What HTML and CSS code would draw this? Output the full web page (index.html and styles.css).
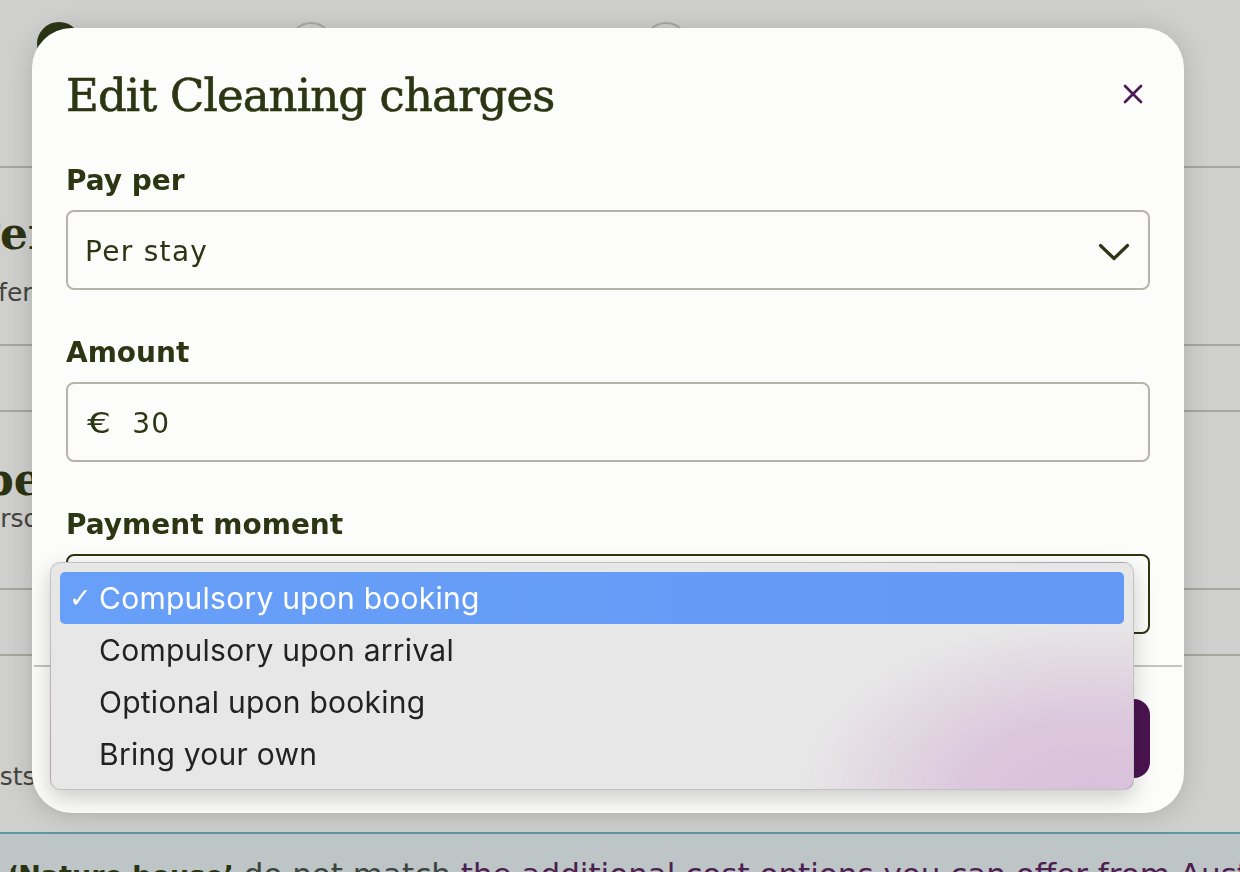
FILE: index.html
```html
<!DOCTYPE html>
<html lang="en">
<head>
<meta charset="utf-8">
<title>Edit Cleaning charges</title>
<link rel="stylesheet" href="styles.css">
</head>
<body>
<div class="page">
  <header class="steps">
    <div class="step"><span class="dot dot-done"></span></div>
    <div class="step"><span class="dot"></span></div>
    <div class="step"><span class="dot"></span></div>
  </header>
  <section class="row row-tall">
    <h2 class="row-title shift-a">Per person</h2>
    <p class="row-sub shift-b">Offer cleaning to your guests</p>
  </section>
  <section class="row row-short"></section>
  <section class="row row-tall row-3">
    <h2 class="row-title shift-c">per stay</h2>
    <p class="row-sub shift-d">person</p>
  </section>
  <section class="row row-short"></section>
  <section class="row row-last">
    <p class="row-sub shift-e">Costs for guests</p>
  </section>
  <div class="notice">
    <p><strong>‘Nature house’</strong> do not match <a class="notice-link">the additional cost options you can offer from Austria</a></p>
  </div>
</div>

<div class="modal">
  <div class="modal-head">
    <h1 class="modal-title">Edit Cleaning charges</h1>
    <button class="close" aria-label="Close">
      <svg width="20" height="20" viewBox="0 0 20 20"><path d="M2 2 L18 18 M18 2 L2 18" stroke="#4b1a55" stroke-width="2.6" fill="none" stroke-linecap="round"/></svg>
    </button>
  </div>

  <div class="field">
    <span class="field-label">Pay per</span>
    <div class="box">
      <span>Per stay</span>
      <svg class="chev" width="32" height="18" viewBox="0 0 32 18"><path d="M2.5 2.5 L16 15.5 L29.5 2.5" stroke="#2d3512" stroke-width="3.2" fill="none" stroke-linecap="round" stroke-linejoin="round"/></svg>
    </div>
  </div>

  <div class="field">
    <span class="field-label">Amount</span>
    <div class="box box-start">
      <span class="currency">€</span><span class="amount">30</span>
    </div>
  </div>

  <div class="field">
    <span class="field-label">Payment moment</span>
    <div class="box box-focus">
      <span>Compulsory upon booking</span>
      <svg class="chev" width="32" height="18" viewBox="0 0 32 18"><path d="M2.5 2.5 L16 15.5 L29.5 2.5" stroke="#2d3512" stroke-width="3.2" fill="none" stroke-linecap="round" stroke-linejoin="round"/></svg>
    </div>
  </div>

  <hr class="divider">

  <div class="modal-foot">
    <button class="save">Save</button>
  </div>
</div>

<div class="menu">
  <div class="menu-item selected"><span class="check">✓</span><span>Compulsory upon booking</span></div>
  <div class="menu-item"><span class="check"></span><span>Compulsory upon arrival</span></div>
  <div class="menu-item"><span class="check"></span><span>Optional upon booking</span></div>
  <div class="menu-item"><span class="check"></span><span>Bring your own</span></div>
</div>
</body>
</html>
```

FILE: styles.css
```css
html, body {
  margin: 0;
  height: 872px;
  overflow: hidden;
}
body {
  background: #cfcfcd;
  font-family: "DejaVu Sans", sans-serif;
}

/* background page */
.steps {
  height: 168px;
  box-sizing: border-box;
  padding: 22px 0 0 37px;
  display: grid;
  grid-template-columns: 252px 355px 1fr;
  align-items: start;
  border-bottom: 2px solid #a6a59e;
}
.dot {
  display: block;
  width: 44px;
  height: 44px;
  border-radius: 50%;
  box-sizing: border-box;
  border: 2px solid #a9a8a1;
}
.dot-done {
  background: #2e3516;
  border-color: #2e3516;
}
.row {
  box-sizing: border-box;
  border-bottom: 2px solid #a6a59e;
  overflow: hidden;
}
.row-tall { height: 178px; padding-top: 40px; }
.row-short { height: 66px; }
.row-3 { padding-top: 42px; }
.row-last {
  height: 178px;
  padding-top: 106px;
  border-bottom-color: #5b97a2;
}
.row-title {
  margin: 0;
  font: bold 44px/52px "DejaVu Serif", serif;
  color: #2b3311;
  white-space: nowrap;
}
.row-sub {
  margin: 18px 0 0;
  font: 25px/30px "DejaVu Sans", sans-serif;
  color: #45453f;
  white-space: nowrap;
}
.row-3 .row-sub { margin-top: -2px; }
.row-last .row-sub { margin-top: 0; }
.shift-a { margin-left: -32px; }
.shift-b { margin-left: -30px; }
.shift-c { margin-left: -17px; }
.shift-d { margin-left: -31px; }
.shift-e { margin-left: -33px; }

.notice {
  background: #bec5c6;
  height: 38px;
  box-sizing: border-box;
  padding: 23px 0 0 8px;
  overflow: hidden;
}
.notice p {
  margin: 0;
  font: 31px/34px "DejaVu Sans", sans-serif;
  color: #3d4440;
  white-space: nowrap;
}
.notice strong {
  color: #2b3311;
  font-size: 27px;
}
.notice-link { color: #4d2050; }

/* modal */
.modal {
  position: fixed;
  left: 32px;
  top: 28px;
  width: 1152px;
  height: 785px;
  box-sizing: border-box;
  padding: 42px 34px 34px;
  background: #fcfcfa;
  border-radius: 40px;
  box-shadow: 0 2px 26px rgba(0, 0, 0, 0.16);
  display: flex;
  flex-direction: column;
}
.modal-head {
  display: flex;
  justify-content: space-between;
  align-items: center;
}
.modal-title {
  margin: 0;
  font: normal 45px/52px "DejaVu Serif", serif;
  letter-spacing: -0.9px;
  color: #2d3512;
  -webkit-text-stroke: 0.6px #2d3512;
}
.close {
  background: none;
  border: 0;
  padding: 0;
  width: 20px;
  height: 20px;
  margin: -5px 7px 0 0;
  display: flex;
}
.field { margin-top: 43px; }
.field + .field { margin-top: 47px; }
.field-label {
  display: block;
  font: bold 28px/32px "DejaVu Sans", sans-serif;
  color: #2d3512;
  margin-bottom: 13px;
}
.box {
  height: 80px;
  box-sizing: border-box;
  border: 2px solid #b6b4a9;
  border-radius: 8px;
  display: flex;
  align-items: center;
  justify-content: space-between;
  padding: 4px 18px 0 17px;
  font: 28px/32px "DejaVu Sans", sans-serif;
  letter-spacing: 1.3px;
  color: #2d3512;
}
.box-start { justify-content: flex-start; }
.box-focus { border-color: #2d3512; }
.chev { display: block; }
.currency {
  display: inline-block;
  transform: scaleX(1.35);
  transform-origin: left center;
  margin-left: 2px;
}
.amount { margin-left: 26px; }
.divider {
  margin: 31px -32px 0;
  height: 2px;
  border: 0;
  background: #c6c4ba;
}
.modal-foot {
  display: flex;
  justify-content: flex-end;
  margin-top: 32px;
}
.save {
  width: 250px;
  height: 79px;
  border: 0;
  border-radius: 16px;
  background: #4b1450;
  color: #fff;
  font: bold 28px "DejaVu Sans", sans-serif;
}

/* native-style dropdown */
.menu {
  position: fixed;
  left: 50px;
  top: 562px;
  width: 1084px;
  height: 228px;
  box-sizing: border-box;
  padding: 9px;
  border: 1px solid rgba(0, 0, 0, 0.16);
  border-radius: 10px;
  background:
    radial-gradient(ellipse 290px 175px at 1040px 232px, #d8c0da 0%, #dcc8dd 45%, rgba(231, 231, 231, 0) 100%),
    #e7e7e7;
  box-shadow: 0 8px 22px rgba(0, 0, 0, 0.2);
}
.menu-item {
  height: 52px;
  display: flex;
  align-items: center;
  padding-left: 9px;
  font: 30px/52px Inter, "DejaVu Sans", sans-serif;
  letter-spacing: 0.25px;
  color: #222;
  border-radius: 5px;
}
.menu-item.selected {
  background: linear-gradient(90deg, #689ff8, #6399f5);
  color: #fff;
}
.check {
  width: 30px;
  flex: none;
  font: 27px/52px "DejaVu Sans", sans-serif;
}
```
